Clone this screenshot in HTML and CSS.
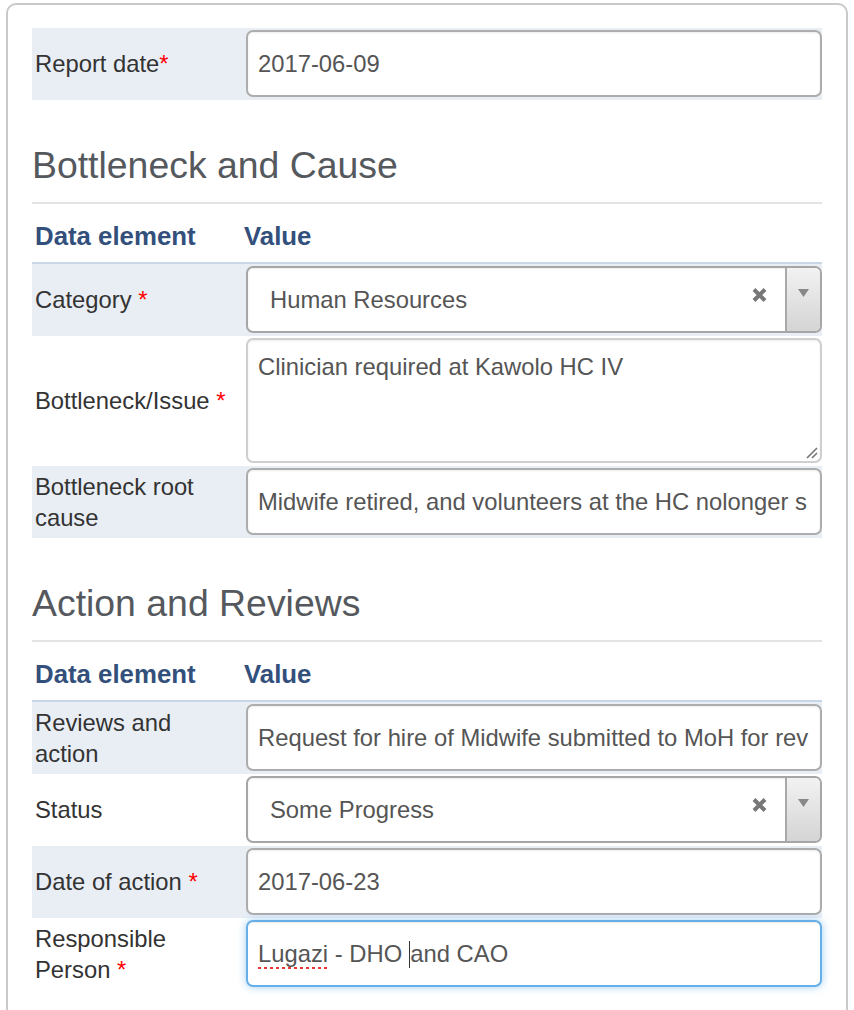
FILE: index.html
```html
<!DOCTYPE html>
<html lang="en">
<head>
<meta charset="utf-8">
<title>Bottleneck report</title>
<link rel="stylesheet" href="styles.css">
</head>
<body>
<div class="card">
  <div class="row alt">
    <div class="label"><span>Report date<span class="req">*</span></span></div>
    <div class="value"><div class="field"><span class="field-text">2017-06-09</span></div></div>
  </div>

  <h3 class="section">Bottleneck and Cause</h3>
  <div class="thead">
    <div class="th">Data element</div>
    <div class="th th-value">Value</div>
  </div>
  <div class="row alt">
    <div class="label"><span>Category <span class="req">*</span></span></div>
    <div class="value">
      <div class="field select">
        <span class="field-text">Human Resources</span>
        <svg class="clear" width="15" height="14" viewBox="0 0 15 14"><path d="M2 1.5 L13 12.5 M13 1.5 L2 12.5" stroke="#777" stroke-width="4"/></svg>
        <span class="arrow"><svg width="11" height="8" viewBox="0 0 11 8"><path d="M0 0 H11 L5.5 8 Z" fill="#888"/></svg></span>
      </div>
    </div>
  </div>
  <div class="row">
    <div class="label"><span>Bottleneck/Issue <span class="req">*</span></span></div>
    <div class="value">
      <div class="field area">
        <span class="field-text">Clinician required at Kawolo HC IV</span>
        <svg class="grip" width="14" height="14" viewBox="0 0 14 14"><path d="M13 3 L3 13 M13 8 L8 13" stroke="#777" stroke-width="1.6"/></svg>
      </div>
    </div>
  </div>
  <div class="row alt">
    <div class="label"><span>Bottleneck root cause</span></div>
    <div class="value"><div class="field"><span class="field-text">Midwife retired, and volunteers at the HC nolonger s</span></div></div>
  </div>

  <h3 class="section">Action and Reviews</h3>
  <div class="thead">
    <div class="th">Data element</div>
    <div class="th th-value">Value</div>
  </div>
  <div class="row alt">
    <div class="label"><span>Reviews and action</span></div>
    <div class="value"><div class="field"><span class="field-text">Request for hire of Midwife submitted to MoH for rev</span></div></div>
  </div>
  <div class="row">
    <div class="label"><span>Status</span></div>
    <div class="value">
      <div class="field select">
        <span class="field-text">Some Progress</span>
        <svg class="clear" width="15" height="14" viewBox="0 0 15 14"><path d="M2 1.5 L13 12.5 M13 1.5 L2 12.5" stroke="#777" stroke-width="4"/></svg>
        <span class="arrow"><svg width="11" height="8" viewBox="0 0 11 8"><path d="M0 0 H11 L5.5 8 Z" fill="#888"/></svg></span>
      </div>
    </div>
  </div>
  <div class="row alt">
    <div class="label"><span>Date of action <span class="req">*</span></span></div>
    <div class="value"><div class="field"><span class="field-text">2017-06-23</span></div></div>
  </div>
  <div class="row">
    <div class="label"><span>Responsible <span class="nowrap">Person <span class="req">*</span></span></span></div>
    <div class="value"><div class="field focus"><span class="field-text"><span class="misspelt">Lugazi</span> - DHO <span class="caret"></span>and CAO</span></div></div>
  </div>
</div>
</body>
</html>
```

FILE: styles.css
```css
body {
  margin: 0;
  background: #fff;
  color: #333;
  font-family: "Liberation Sans", Arial, sans-serif;
}

.card {
  margin: 3px 6px 0 6px;
  border: 2px solid #c9c9c9;
  border-radius: 10px;
  padding: 23px 24px 60px;
  background: #fff;
}

.row {
  display: grid;
  grid-template-columns: 210px minmax(0, 1fr);
}

.row.alt {
  background: #e9eef5;
}

.label {
  display: flex;
  align-items: center;
  padding: 0 12px 0 3px;
  font-size: 23.8px;
  line-height: 31.5px;
  color: #333;
}

.nowrap {
  white-space: nowrap;
}

.req {
  color: #f00;
}

.value {
  min-width: 0;
  padding: 2px 0 3px 4px;
}

.field {
  position: relative;
  box-sizing: border-box;
  height: 67px;
  display: flex;
  align-items: center;
  padding: 0 10px;
  border: 2px solid #adadad;
  border-radius: 7px;
  background: #fff;
  box-shadow: inset 0 1px 2px rgba(0, 0, 0, 0.08);
  font-size: 23.8px;
  line-height: 31.5px;
  color: #555;
  overflow: hidden;
}

.field-text {
  flex: 1;
  min-width: 0;
  white-space: nowrap;
  overflow: hidden;
}

.select {
  padding: 0 0 0 22px;
  border-color: #a6a6a6;
}

.clear {
  flex: none;
  margin: 0 18px 9px 10px;
}

.arrow {
  flex: none;
  align-self: stretch;
  width: 35px;
  box-sizing: border-box;
  border-left: 2px solid #a9a9a9;
  background: linear-gradient(#f2f2f2, #d4d4d4);
  display: flex;
  justify-content: center;
  padding-top: 21px;
}

.arrow svg {
  display: block;
}

.area {
  height: 125px;
  align-items: flex-start;
  padding-top: 11px;
  border-color: #cfcfcf;
}

.area .field-text {
  white-space: normal;
}

.grip {
  position: absolute;
  right: 2px;
  bottom: 2px;
}

.focus {
  border-color: #66afe9;
  box-shadow: inset 0 1px 1px rgba(0, 0, 0, 0.075), 0 0 8px rgba(102, 175, 233, 0.6);
}

.misspelt {
  text-decoration: underline dotted #e33;
  text-decoration-thickness: 3px;
  text-underline-offset: 5px;
}

.caret {
  display: inline-block;
  width: 1.5px;
  height: 27px;
  background: #333;
  vertical-align: -6px;
}

.section {
  margin: 45px 0 0;
  padding-bottom: 16px;
  border-bottom: 2px solid #e4e4e4;
  font-size: 37.4px;
  line-height: 41px;
  font-weight: normal;
  color: #55595e;
}

.thead {
  display: grid;
  grid-template-columns: 210px minmax(0, 1fr);
  padding: 17px 0 11px;
  border-bottom: 2px solid #c9d6e6;
  font-size: 25.8px;
  line-height: 30px;
  font-weight: bold;
  color: #33507c;
}

.th {
  padding-left: 3px;
}

.th-value {
  padding-left: 2px;
}
```
